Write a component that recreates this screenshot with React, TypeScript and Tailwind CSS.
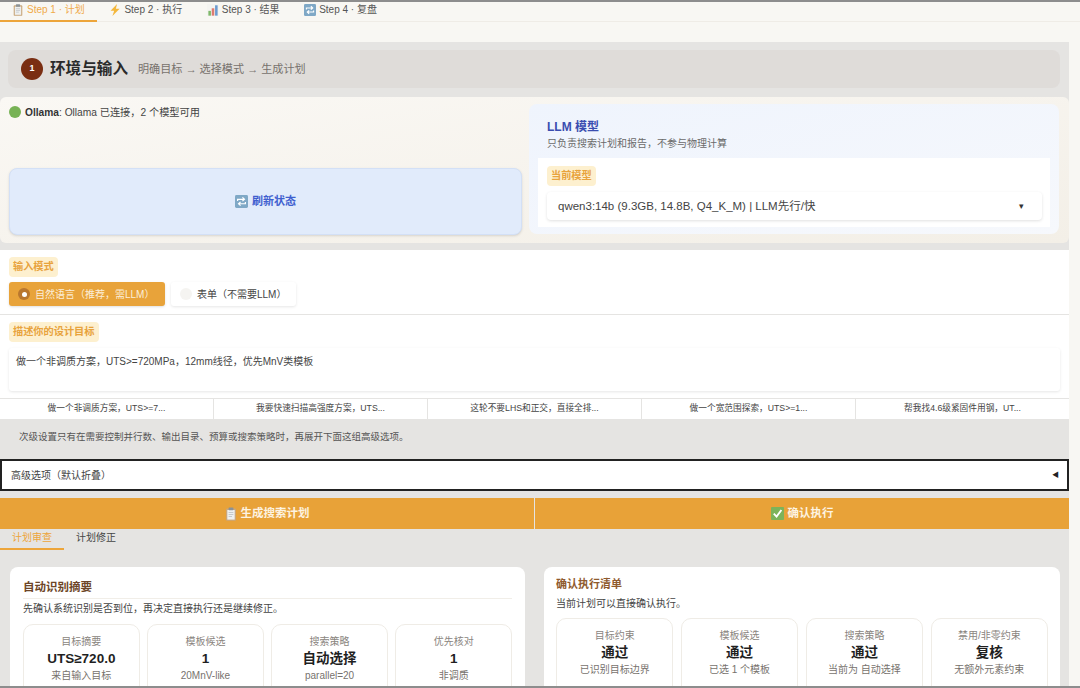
import {FC} from "react";

const FONT = "font-['Liberation_Sans','Noto_Sans_CJK_SC',sans-serif]";

const ClipIcon: FC<{className?: string}> = ({className}) => (
    <svg viewBox="0 0 12 14" className={className}>
        <rect x="1" y="1.5" width="10" height="12.2" rx="1" fill="#c9a77c" />
        <rect x="2.3" y="3" width="7.4" height="9.6" fill="#eef0f0" />
        <rect x="3.6" y="0.4" width="4.8" height="2.8" rx="0.6" fill="#8b9297" />
        <path d="M3.6 5.5h4.8M3.6 7.5h4.8M3.6 9.5h3.4" stroke="#b4b9bc" strokeWidth="0.7" />
    </svg>
);

const RefreshIcon: FC<{className?: string}> = ({className}) => (
    <svg viewBox="0 0 14 14" className={className}>
        <rect width="14" height="14" rx="1.5" fill="#7fa8c6" />
        <path d="M2.8 6.4V4.6h7M8 2.6l2.2 2-2.2 2" stroke="#fff" strokeWidth="1.3" fill="none" />
        <path d="M11.2 7.6v1.8h-7M6 7.4l-2.2 2 2.2 2" stroke="#fff" strokeWidth="1.3" fill="none" />
    </svg>
);

const BoltIcon: FC<{className?: string}> = ({className}) => (
    <svg viewBox="0 0 12 14" className={className}>
        <path d="M8.4 0 .8 8h4.2L3 14l8.4-8.6H7z" fill="#f3b73c" />
    </svg>
);

const ChartIcon: FC<{className?: string}> = ({className}) => (
    <svg viewBox="0 0 14 14" className={className}>
        <rect width="14" height="14" fill="#f4f4f1" />
        <rect x="1.6" y="8" width="3" height="5.6" fill="#7fb86a" />
        <rect x="5.5" y="5" width="3" height="8.6" fill="#dd7b70" />
        <rect x="9.4" y="1.5" width="3" height="12.1" fill="#6c9bd0" />
    </svg>
);

const CheckIcon: FC<{className?: string}> = ({className}) => (
    <svg viewBox="0 0 14 14" className={className}>
        <rect width="14" height="14" rx="1" fill="#7cb35a" />
        <path d="M3 7.2 6 10.4 11.2 3.2" stroke="#fff" strokeWidth="2" fill="none" />
    </svg>
);

const Chip: FC<{text: string}> = ({text}) => (
    <span className="block w-fit rounded-[4px] bg-[#fdf0cf] px-[4px] py-[3px] text-[10.2px] leading-[14px] font-bold text-[#e8a33d]">
        {text}
    </span>
);

const StatCard: FC<{label: string; value: string; note: string}> = ({label, value, note}) => (
    <div className="flex-1 min-w-0 h-[70px] rounded-t-[10px] border border-[#efece6] bg-white pt-[10px] text-center">
        <div className="text-[10px] leading-[14px] text-[#8a8580]">{label}</div>
        <div className="text-[13.5px] leading-[19px] font-bold text-[#1f1f1f]">{value}</div>
        <div className="text-[10px] leading-[16px] text-[#77726d]">{note}</div>
    </div>
);

const tabs = [
    {label: "Step 1 · 计划", Icon: ClipIcon, active: true},
    {label: "Step 2 · 执行", Icon: BoltIcon, active: false},
    {label: "Step 3 · 结果", Icon: ChartIcon, active: false},
    {label: "Step 4 · 复盘", Icon: RefreshIcon, active: false},
];

const suggestions = [
    "做一个非调质方案，UTS>=7...",
    "我要快速扫描高强度方案，UTS...",
    "这轮不要LHS和正交，直接全排...",
    "做一个宽范围探索，UTS>=1...",
    "帮我找4.6级紧固件用钢，UT...",
];

export default function App() {
    return (
        <div className={`${FONT} flex h-[688px] w-[1080px] flex-col overflow-hidden border-y-2 border-y-[#8d8d8d] bg-[#f8f7f3] text-[#333]`}>
            <nav className="flex h-[20px] shrink-0 border-b border-[#efece6] text-[10px]">
                {tabs.map(({label, Icon, active}) => (
                    <div
                        key={label}
                        className={`flex h-[20px] w-[97.4px] items-start gap-[3px] pl-[12px] pt-[1px] leading-[14px] ${active ? "border-b-2 border-[#eda53a] text-[#f0aa4a]" : "text-[#555]"}`}>
                        <Icon className="mt-[1px] h-[12px] w-[12px]" />
                        {label}
                    </div>
                ))}
            </nav>
            <div className="h-[20px] shrink-0" />
            <main className="flex w-[1069px] flex-1 flex-col bg-[#e5e4e2]">
                <header className="mx-[8px] mt-[8px] flex h-[38px] w-[1052px] items-center rounded-[8px] bg-[#dfdcd9] pl-[13px]">
                    <span className="flex h-[22px] w-[22px] items-center justify-center rounded-full bg-[#7a2e12] text-[9px] font-bold text-white">1</span>
                    <h1 className="ml-[7px] text-[15.6px] font-bold text-[#2a2a2a]">环境与输入</h1>
                    <p className="ml-[10px] text-[11.1px] text-[#77726d]">明确目标 → 选择模式 → 生成计划</p>
                </header>
                <section className="mt-[9px] flex h-[146px] gap-[7px] rounded-[6px] bg-gradient-to-br from-[#faf8f4] to-[#f3efe7] pl-[9px] pr-[10px] pt-[7px]">
                    <div className="flex w-[513px] flex-col justify-between pb-[8px]">
                        <p className="text-[10.2px] leading-[14px] text-[#444]">
                            <span className="mr-[4px] inline-block h-[12px] w-[12px] translate-y-[2px] rounded-full bg-[#77b255]" />
                            <b className="text-[#333]">Ollama</b>: Ollama 已连接，2 个模型可用
                        </p>
                        <button type="button" className="flex h-[67px] items-center justify-center gap-[4px] rounded-[8px] border border-[#d3e0f6] bg-[#e1ebfb] text-[11px] font-bold text-[#3f5fcf] shadow-sm">
                            <RefreshIcon className="h-[13px] w-[13px]" />
                            刷新状态
                        </button>
                    </div>
                    <div className="flex h-[130px] w-[530px] flex-col rounded-[8px] bg-gradient-to-br from-[#eff4fd] to-[#f6f8fc] px-[9px] pt-[15px] pb-[7px]">
                        <h2 className="pl-[9px] text-[12px] leading-[16px] font-bold text-[#3a4db0]">LLM 模型</h2>
                        <p className="pl-[9px] pt-[2px] text-[10px] leading-[14px] text-[#6b6b6b]">只负责搜索计划和报告，不参与物理计算</p>
                        <div className="mt-[7px] flex-1 bg-white pl-[9px] pr-[8px] pt-[8px]">
                            <Chip text="当前模型" />
                            <div className="mt-[6px] flex h-[28px] items-center justify-between rounded-[4px] bg-white pl-[11px] pr-[18px] pt-[2px] text-[11.5px] text-[#444] shadow-[0_1px_3px_rgba(0,0,0,0.12)]">
                                qwen3:14b (9.3GB, 14.8B, Q4_K_M) | LLM先行/快
                                <span className="text-[9px] text-[#333]">▾</span>
                            </div>
                        </div>
                    </div>
                </section>
                <section className="mt-[7px] h-[64px] shrink-0 bg-white pl-[9px] pt-[7px]">
                    <Chip text="输入模式" />
                    <div className="mt-[5px] flex gap-[6px] text-[10px]">
                        <div className="flex h-[24px] w-[156px] items-center rounded-[3px] bg-[#e8a33a] pl-[9px] text-[#fbeed8] shadow-sm">
                            <span className="flex h-[12px] w-[12px] items-center justify-center rounded-full bg-[#b9772f]">
                                <span className="h-[5px] w-[5px] rounded-full bg-white" />
                            </span>
                            <span className="ml-[5px]">自然语言（推荐，需LLM）</span>
                        </div>
                        <div className="flex h-[24px] w-[125px] items-center rounded-[3px] bg-white pl-[9px] text-[#444] shadow-[0_1px_3px_rgba(0,0,0,0.1)]">
                            <span className="h-[12px] w-[12px] rounded-full bg-[#f5f4f1]" />
                            <span className="ml-[5px]">表单（不需要LLM）</span>
                        </div>
                    </div>
                </section>
                <section className="mt-[1px] h-[83px] shrink-0 bg-white px-[9px] pt-[7px]">
                    <Chip text="描述你的设计目标" />
                    <div className="mt-[6px] h-[43px] rounded-[3px] bg-white px-[7px] pt-[7px] text-[10px] leading-[14px] text-[#444] shadow-[0_1px_3px_rgba(0,0,0,0.1)]">
                        做一个非调质方案，UTS&gt;=720MPa，12mm线径，优先MnV类模板
                    </div>
                </section>
                <div className="mt-[1px] grid h-[20px] shrink-0 grid-cols-5 gap-px bg-[#e5e4e2]">
                    {suggestions.map((s) => (
                        <div key={s} className="flex items-center justify-center bg-white text-[8.7px] text-[#444]">{s}</div>
                    ))}
                </div>
                <p className="pl-[19px] pt-[11px] text-[9.5px] leading-[14px] text-[#555]">次级设置只有在需要控制并行数、输出目录、预算或搜索策略时，再展开下面这组高级选项。</p>
                <div className="mt-[15px] flex h-[32px] shrink-0 items-center justify-between border-2 border-[#222] bg-white pl-[9px] pr-[8px] text-[10px] text-[#444]">
                    高级选项（默认折叠）
                    <span className="text-[7px] text-[#222]">◀</span>
                </div>
                <div className="mt-[7px] grid h-[31px] shrink-0 grid-cols-2 gap-px text-[11.5px] font-bold text-[#fdf3e1]">
                    <button type="button" className="flex items-center justify-center gap-[4px] bg-[#e8a238]"><ClipIcon className="h-[14px] w-[12px]" />生成搜索计划</button>
                    <button type="button" className="flex items-center justify-center gap-[4px] bg-[#e8a238]"><CheckIcon className="h-[13px] w-[13px]" />确认执行</button>
                </div>
                <div className="flex h-[21px] shrink-0 text-[10px]">
                    <div className="w-[64px] border-b-2 border-[#eda53a] pt-[1px] text-center text-[#eda53a]">计划审查</div>
                    <div className="w-[64px] pt-[1px] text-center text-[#444]">计划修正</div>
                </div>
                <div className="mt-[17px] grid flex-1 grid-cols-[515px_516px] gap-[19px] pl-[10px]">
                    <section className="min-w-0 rounded-t-[8px] bg-white px-[13px] pt-[12px]">
                        <h3 className="border-b border-[#f1eee8] pb-[2px] text-[11.5px] leading-[17px] font-bold text-[#6d4527]">自动识别摘要</h3>
                        <p className="pt-[2px] text-[10px] leading-[16px] text-[#444]">先确认系统识别是否到位，再决定直接执行还是继续修正。</p>
                        <div className="mt-[7px] flex gap-[7.5px]">
                            <StatCard label="目标摘要" value="UTS≥720.0" note="来自输入目标" />
                            <StatCard label="模板候选" value="1" note="20MnV-like" />
                            <StatCard label="搜索策略" value="自动选择" note="parallel=20" />
                            <StatCard label="优先核对" value="1" note="非调质" />
                        </div>
                    </section>
                    <section className="min-w-0 rounded-t-[8px] bg-white px-[12px] pt-[10px]">
                        <h3 className="pb-[2px] text-[11px] leading-[15px] font-bold text-[#8f5a2e]">确认执行清单</h3>
                        <p className="pt-[2px] text-[10px] leading-[16px] text-[#444]">当前计划可以直接确认执行。</p>
                        <div className="mt-[6px] flex gap-[7.5px]">
                            <StatCard label="目标约束" value="通过" note="已识别目标边界" />
                            <StatCard label="模板候选" value="通过" note="已选 1 个模板" />
                            <StatCard label="搜索策略" value="通过" note="当前为 自动选择" />
                            <StatCard label="禁用/非零约束" value="复核" note="无额外元素约束" />
                        </div>
                    </section>
                </div>
            </main>
        </div>
    );
}
